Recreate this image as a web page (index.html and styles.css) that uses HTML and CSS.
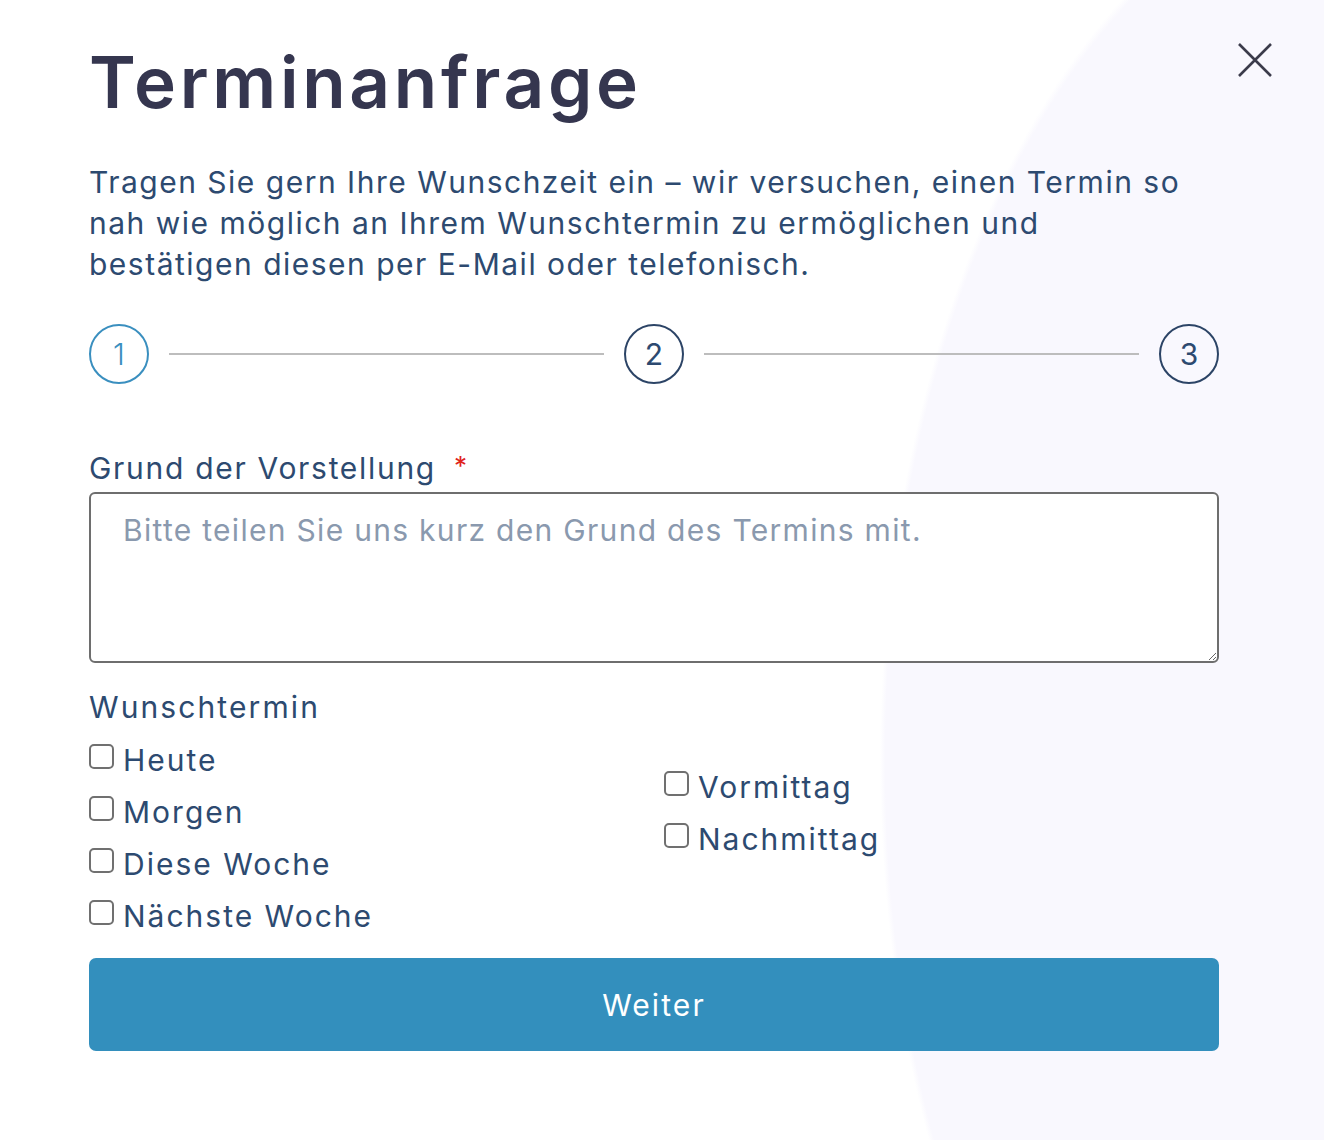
FILE: index.html
```html
<!DOCTYPE html>
<html lang="de">
<head>
    <meta charset="UTF-8">
    <meta name="viewport" content="width=device-width, initial-scale=1.0">
    <title>Terminanfrage</title>
    <link rel="stylesheet" href="styles.css">
</head>
<body>
    <div class="modal">
        <button class="close" type="button" aria-label="Schließen">
            <svg width="34" height="34" viewBox="0 0 34 34">
                <path d="M1 1 L33 33 M33 1 L1 33" stroke="#3b3b4b" stroke-width="2.6" fill="none"/>
            </svg>
        </button>

        <h1>Terminanfrage</h1>
        <p class="intro">Tragen Sie gern Ihre Wunschzeit ein – wir versuchen, einen Termin so nah wie möglich an Ihrem Wunschtermin zu ermöglichen und bestätigen diesen per E-Mail oder telefonisch.</p>

        <div class="steps">
            <div class="step active">1</div>
            <div class="step-line"></div>
            <div class="step">2</div>
            <div class="step-line"></div>
            <div class="step">3</div>
        </div>

        <form class="form">
            <label class="field-label" for="grund">Grund der Vorstellung <span class="required">*</span></label>
            <textarea id="grund" placeholder="Bitte teilen Sie uns kurz den Grund des Termins mit."></textarea>

            <div class="field-label wish">Wunschtermin</div>
            <div class="options">
                <div class="col">
                    <label class="check"><input type="checkbox"> Heute</label>
                    <label class="check"><input type="checkbox"> Morgen</label>
                    <label class="check"><input type="checkbox"> Diese Woche</label>
                    <label class="check"><input type="checkbox"> Nächste Woche</label>
                </div>
                <div class="col col-right">
                    <label class="check"><input type="checkbox"> Vormittag</label>
                    <label class="check"><input type="checkbox"> Nachmittag</label>
                </div>
            </div>

            <button class="submit" type="button">Weiter</button>
        </form>
    </div>
</body>
</html>
```

FILE: styles.css
```css
html, body {
    margin: 0;
    height: 100%;
}
body {
    font-family: Inter, "Noto Sans", sans-serif;
    color: #2d4a70;
    background-color: #fff;
    background-image: radial-gradient(ellipse 520px 900px at 1400px 760px, #f9f8fe 99%, rgba(249,248,254,0) 100%);
}
.modal {
    position: relative;
    width: 1130px;
    padding: 40px 0 0 89px;
}
.close {
    position: absolute;
    top: 43px;
    right: -53px;
    width: 34px;
    height: 34px;
    padding: 0;
    border: none;
    background: none;
    cursor: pointer;
}
.close svg {
    display: block;
}
h1 {
    margin: 0;
    font-size: 71px;
    font-weight: 600;
    line-height: 84px;
    letter-spacing: 3.7px;
    color: #35364f;
}
.intro {
    max-width: 1100px;
    margin: 38px 0 0;
    font-size: 30px;
    line-height: 41px;
    letter-spacing: 1.5px;
}
.steps {
    display: flex;
    align-items: center;
    margin-top: 39px;
}
.step {
    width: 56px;
    height: 56px;
    border: 2px solid #2c4466;
    border-radius: 50%;
    display: flex;
    align-items: center;
    justify-content: center;
    font-size: 30px;
    color: #2d4a70;
    flex: none;
}
.step.active {
    border-color: #3a8fbf;
    color: #3a8fbf;
    font-weight: 300;
}
.step-line {
    flex: 1;
    height: 2px;
    background-color: #bdbdbd;
    margin: 0 20px;
}
.form {
    margin-top: 62px;
}
.field-label {
    display: block;
    font-size: 30px;
    line-height: 40px;
    letter-spacing: 1.7px;
}
.required {
    color: #e0241b;
    margin-left: 8px;
    vertical-align: 4px;
    font-size: 26px;
}
textarea {
    display: block;
    width: 100%;
    height: 171px;
    box-sizing: border-box;
    margin-top: 4px;
    padding: 18px 32px;
    border: 2px solid #6e6e6e;
    border-radius: 6px;
    font-family: inherit;
    font-size: 30px;
    letter-spacing: 1.3px;
    color: #2d4a70;
    background: #fff;
}
textarea::placeholder {
    color: #8a99ae;
}
.wish {
    margin-top: 24px;
    letter-spacing: 2.1px;
}
.options {
    display: grid;
    grid-template-columns: 1fr 1fr;
    column-gap: 20px;
    margin-top: 13px;
}
.col {
    display: flex;
    flex-direction: column;
    gap: 12px;
}
.col-right {
    padding-top: 27px;
}
.check {
    display: flex;
    align-items: center;
    gap: 9px;
    font-size: 30px;
    line-height: 40px;
    letter-spacing: 2px;
    cursor: pointer;
}
.check input {
    appearance: none;
    -webkit-appearance: none;
    width: 25px;
    height: 25px;
    margin: 0 0 8px;
    border: 2px solid #707070;
    border-radius: 5px;
    background: #fff;
    flex: none;
}
.check input:checked {
    background: #338fbd;
    border-color: #338fbd;
}
.submit {
    display: block;
    width: 100%;
    height: 93px;
    margin-top: 22px;
    border: none;
    border-radius: 7px;
    background-color: #338fbd;
    color: #fff;
    font-family: inherit;
    font-size: 30px;
    letter-spacing: 2.1px;
    cursor: pointer;
}
.submit:hover {
    background-color: #2d82ad;
}
```
